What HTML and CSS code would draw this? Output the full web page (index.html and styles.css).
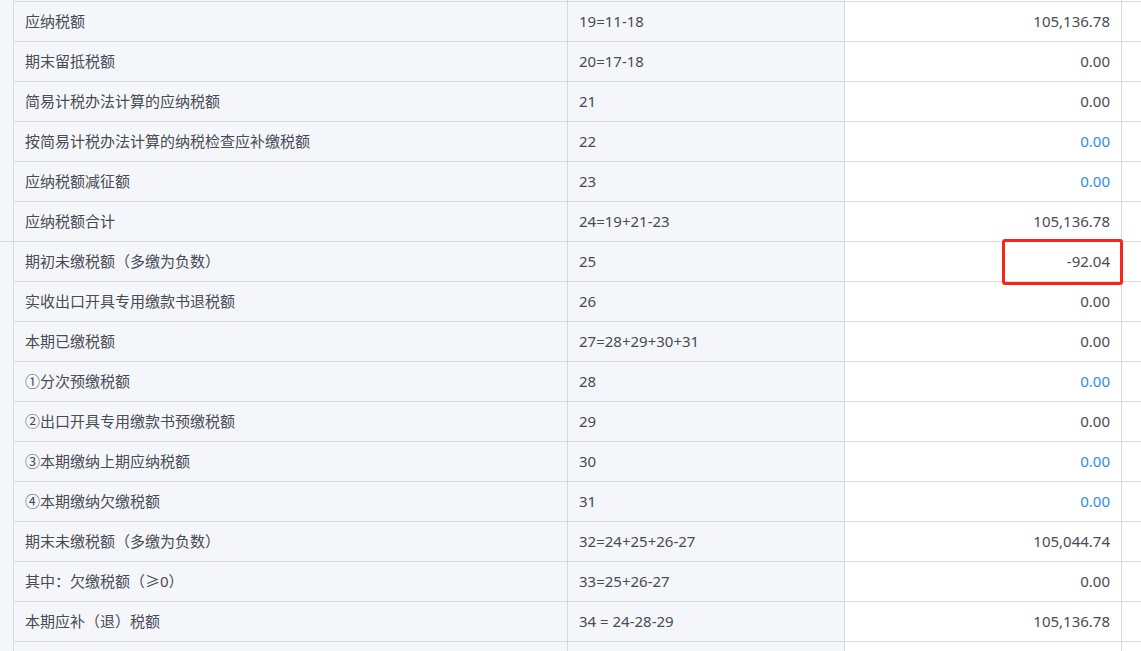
FILE: index.html
```html
<!DOCTYPE html>
<html lang="zh-CN">
<head>
    <meta charset="UTF-8">
    <meta name="viewport" content="width=device-width, initial-scale=1.0">
    <link rel="stylesheet" href="styles.css">
    <title>增值税申报表</title>
</head>
<body>
    <div class="sheet">
        <div class="row top">
            <div class="gutter"></div>
            <div class="cell name"></div>
            <div class="cell code"></div>
            <div class="cell amount"></div>
            <div class="cell rest"></div>
        </div>
        <div class="row">
            <div class="gutter"></div>
            <div class="cell name">应纳税额</div>
            <div class="cell code">19=11-18</div>
            <div class="cell amount">105,136.78</div>
            <div class="cell rest"></div>
        </div>
        <div class="row">
            <div class="gutter"></div>
            <div class="cell name">期末留抵税额</div>
            <div class="cell code">20=17-18</div>
            <div class="cell amount">0.00</div>
            <div class="cell rest"></div>
        </div>
        <div class="row">
            <div class="gutter"></div>
            <div class="cell name">简易计税办法计算的应纳税额</div>
            <div class="cell code">21</div>
            <div class="cell amount">0.00</div>
            <div class="cell rest"></div>
        </div>
        <div class="row">
            <div class="gutter"></div>
            <div class="cell name">按简易计税办法计算的纳税检查应补缴税额</div>
            <div class="cell code">22</div>
            <div class="cell amount editable">0.00</div>
            <div class="cell rest"></div>
        </div>
        <div class="row">
            <div class="gutter"></div>
            <div class="cell name">应纳税额减征额</div>
            <div class="cell code">23</div>
            <div class="cell amount editable">0.00</div>
            <div class="cell rest"></div>
        </div>
        <div class="row">
            <div class="gutter"></div>
            <div class="cell name">应纳税额合计</div>
            <div class="cell code">24=19+21-23</div>
            <div class="cell amount">105,136.78</div>
            <div class="cell rest"></div>
        </div>
        <div class="row">
            <div class="gutter marked"></div>
            <div class="cell name">期初未缴税额（多缴为负数）</div>
            <div class="cell code">25</div>
            <div class="cell amount highlight">
                -92.04
                <span class="mark-box"></span>
            </div>
            <div class="cell rest"></div>
        </div>
        <div class="row">
            <div class="gutter"></div>
            <div class="cell name">实收出口开具专用缴款书退税额</div>
            <div class="cell code">26</div>
            <div class="cell amount">0.00</div>
            <div class="cell rest"></div>
        </div>
        <div class="row">
            <div class="gutter"></div>
            <div class="cell name">本期已缴税额</div>
            <div class="cell code">27=28+29+30+31</div>
            <div class="cell amount">0.00</div>
            <div class="cell rest"></div>
        </div>
        <div class="row">
            <div class="gutter"></div>
            <div class="cell name">①分次预缴税额</div>
            <div class="cell code">28</div>
            <div class="cell amount editable">0.00</div>
            <div class="cell rest"></div>
        </div>
        <div class="row">
            <div class="gutter"></div>
            <div class="cell name">②出口开具专用缴款书预缴税额</div>
            <div class="cell code">29</div>
            <div class="cell amount">0.00</div>
            <div class="cell rest"></div>
        </div>
        <div class="row">
            <div class="gutter"></div>
            <div class="cell name">③本期缴纳上期应纳税额</div>
            <div class="cell code">30</div>
            <div class="cell amount editable">0.00</div>
            <div class="cell rest"></div>
        </div>
        <div class="row">
            <div class="gutter"></div>
            <div class="cell name">④本期缴纳欠缴税额</div>
            <div class="cell code">31</div>
            <div class="cell amount editable">0.00</div>
            <div class="cell rest"></div>
        </div>
        <div class="row">
            <div class="gutter"></div>
            <div class="cell name">期末未缴税额（多缴为负数）</div>
            <div class="cell code">32=24+25+26-27</div>
            <div class="cell amount">105,044.74</div>
            <div class="cell rest"></div>
        </div>
        <div class="row">
            <div class="gutter"></div>
            <div class="cell name">其中：欠缴税额（≥0）</div>
            <div class="cell code">33=25+26-27</div>
            <div class="cell amount">0.00</div>
            <div class="cell rest"></div>
        </div>
        <div class="row">
            <div class="gutter"></div>
            <div class="cell name">本期应补（退）税额</div>
            <div class="cell code">34 = 24-28-29</div>
            <div class="cell amount">105,136.78</div>
            <div class="cell rest"></div>
        </div>
        <div class="row">
            <div class="gutter"></div>
            <div class="cell name"></div>
            <div class="cell code"></div>
            <div class="cell amount"></div>
            <div class="cell rest"></div>
        </div>
    </div>
</body>
</html>
```

FILE: styles.css
```css
body {
    margin: 0;
    background-color: #ffffff;
    font-family: "Microsoft YaHei", "Noto Sans", "Noto Sans CJK SC", sans-serif;
    font-size: 15px;
    line-height: 20px;
    color: #474b55;
    overflow: hidden;
}

.sheet {
    display: flex;
    flex-direction: column;
    margin-top: -38px;
}

.row {
    display: flex;
    height: 40px;
}

.gutter {
    width: 14px;
    flex-shrink: 0;
    box-sizing: border-box;
    background-color: #f5f6fa;
    border-right: 1px solid #d7d9de;
}

.gutter.marked {
    border-top: 1px solid #d7d9de;
    margin-top: -1px;
    height: 41px;
}

.cell {
    box-sizing: border-box;
    display: flex;
    align-items: center;
    border-bottom: 1px solid #d7d9de;
    border-right: 1px solid #d7d9de;
    padding: 0 11px 1px;
    white-space: nowrap;
    flex-shrink: 0;
}

.name {
    width: 554px;
    background-color: #f5f6fa;
}

.code {
    width: 277px;
    background-color: #f5f6fa;
}

.amount {
    width: 277px;
    justify-content: flex-end;
    background-color: #ffffff;
}

.amount.editable {
    color: #2d8cf0;
}

.rest {
    flex: 1;
    border-right: none;
}

.highlight {
    position: relative;
}

/* red marker drawn over the -92.04 cell */
.mark-box {
    position: absolute;
    left: 157px;
    right: -2px;
    top: -3px;
    height: 46px;
    box-sizing: border-box;
    border: 3px solid #fb2419;
    border-radius: 3px;
}
```
